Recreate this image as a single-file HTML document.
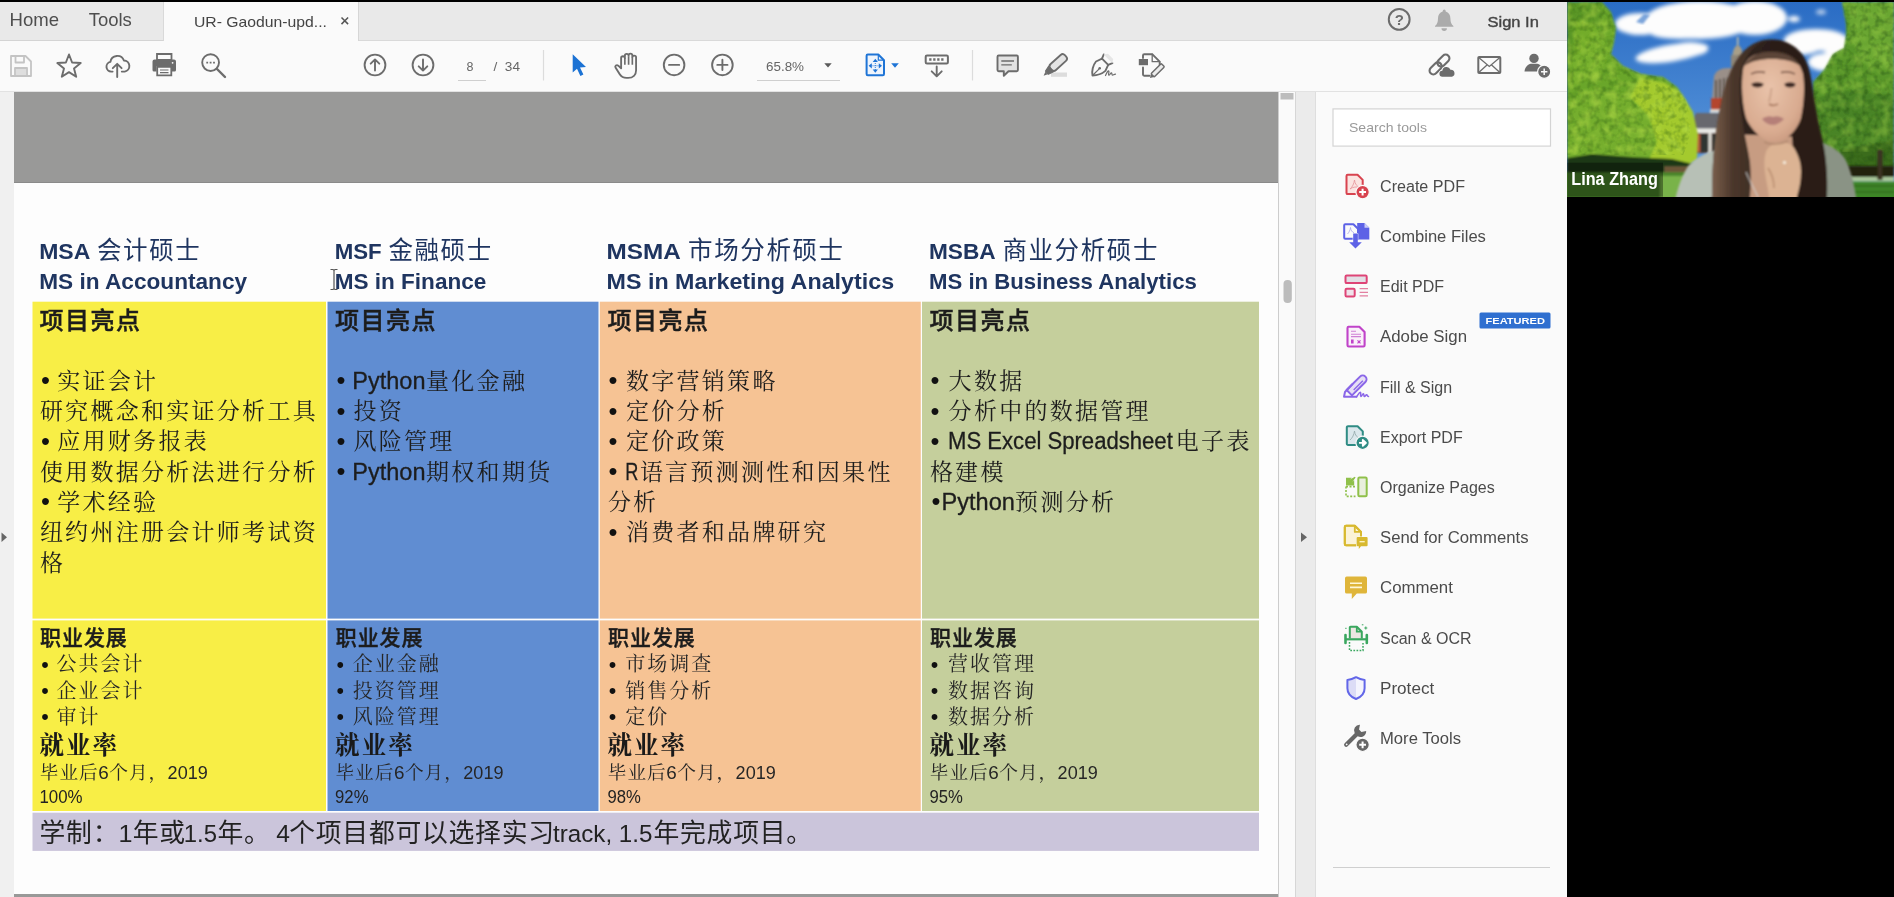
<!DOCTYPE html>
<html lang="zh">
<head>
<meta charset="utf-8">
<title>UR- Gaodun-upd...</title>
<style>
*{box-sizing:border-box;margin:0;padding:0}
html,body{width:1894px;height:897px;overflow:hidden;background:#000}
body{position:relative;font-family:"Liberation Sans","Noto Sans CJK SC",sans-serif;color:#4a4a4a}
.abs{position:absolute}
#app{position:absolute;left:0;top:2px;width:1567px;height:895px;background:#fafafa;overflow:hidden}
#tabbar{position:absolute;left:0;top:0;width:1567px;height:38.5px;background:#e9e9e9;border-bottom:1px solid #d9d9d9}
#hometools{position:absolute;left:0;top:0;width:163.5px;height:38.5px;background:#e9e9e9;border-right:1px solid #d9d9d9;border-bottom:1px solid #d4d4d4}
#acttab{position:absolute;left:163.5px;top:0;width:195.5px;height:39.5px;background:#fafafa;border-right:1px solid #d6d6d6}
#toolbar{position:absolute;left:0;top:38.5px;width:1567px;height:51px;background:#fafafa;border-bottom:1px solid #e2e2e2}
#doc{position:absolute;left:0;top:89.5px;width:1296px;height:806px;background:#f0f0f0}
#docgray{position:absolute;left:13.5px;top:0;width:1264.5px;height:806px;background:#999998}
#page{position:absolute;left:13.5px;top:90px;width:1264.5px;height:712px;background:#fdfdfd;border-top:1px solid #8a8a8a}
#vscroll{position:absolute;left:1278px;top:0;width:18px;height:806px;background:#fafafa;border-left:1px solid #cdcdcd;border-right:1px solid #d6d6d6}
#split{position:absolute;left:1296px;top:89.5px;width:20px;height:806px;background:#ebebeb;border-right:1px solid #dedede}
#panel{position:absolute;left:1316px;top:89.5px;width:251px;height:806px;background:#fafafa}
#ov{position:absolute;left:0;top:0;width:1894px;height:897px;will-change:transform}
</style>
</head>
<body>
<div id="app">
  <div id="tabbar">
    <div id="hometools"></div>
    <div id="acttab"></div>
  </div>
  <div id="toolbar"></div>
  <div id="doc">
    <div id="docgray"></div>
    <div id="page"></div>
    <div id="vscroll"></div>
  </div>
  <div id="split"></div>
  <div id="panel"></div>
</div>
<svg id="ov" width="1894" height="897" viewBox="0 0 1894 897">
<g id="slide">
<rect x="32.5" y="301.7" width="293.5" height="316.9" fill="#f8ee46"/>
<rect x="32.5" y="620.4" width="293.5" height="190.6" fill="#f8ee46"/>
<rect x="327.5" y="301.7" width="271.0" height="316.9" fill="#608dd2"/>
<rect x="327.5" y="620.4" width="271.0" height="190.6" fill="#608dd2"/>
<rect x="599.8" y="301.7" width="321.0" height="316.9" fill="#f6c394"/>
<rect x="599.8" y="620.4" width="321.0" height="190.6" fill="#f6c394"/>
<rect x="922" y="301.7" width="337" height="316.9" fill="#c5cf9c"/>
<rect x="922" y="620.4" width="337" height="190.6" fill="#c5cf9c"/>
<rect x="32.5" y="812.7" width="1226.5" height="38.2" fill="#cbc5db"/>
<text x="39.2" y="258.5" font-size="22.5" font-family="Liberation Sans, Noto Sans CJK SC, sans-serif" font-weight="700" fill="#1f3560" textLength="51.1" lengthAdjust="spacingAndGlyphs">MSA</text>
<text x="97.0 123.1 149.2 175.3" y="259.3" font-size="24.5" font-family="Noto Sans CJK SC, Liberation Sans, sans-serif" font-weight="400" fill="#1f3560">会计硕士</text>
<text x="39.2" y="288.5" font-size="22.5" font-family="Liberation Sans, Noto Sans CJK SC, sans-serif" font-weight="700" fill="#1f3560" textLength="207.9" lengthAdjust="spacingAndGlyphs">MS in Accountancy</text>
<text x="334.7" y="258.5" font-size="22.5" font-family="Liberation Sans, Noto Sans CJK SC, sans-serif" font-weight="700" fill="#1f3560" textLength="47.0" lengthAdjust="spacingAndGlyphs">MSF</text>
<text x="388.4 414.5 440.6 466.7" y="259.3" font-size="24.5" font-family="Noto Sans CJK SC, Liberation Sans, sans-serif" font-weight="400" fill="#1f3560">金融硕士</text>
<text x="334.7" y="288.5" font-size="22.5" font-family="Liberation Sans, Noto Sans CJK SC, sans-serif" font-weight="700" fill="#1f3560" textLength="151.6" lengthAdjust="spacingAndGlyphs">MS in Finance</text>
<text x="606.6" y="258.5" font-size="22.5" font-family="Liberation Sans, Noto Sans CJK SC, sans-serif" font-weight="700" fill="#1f3560" textLength="74.2" lengthAdjust="spacingAndGlyphs">MSMA</text>
<text x="688.1 714.2 740.3 766.4 792.5 818.6" y="259.3" font-size="24.5" font-family="Noto Sans CJK SC, Liberation Sans, sans-serif" font-weight="400" fill="#1f3560">市场分析硕士</text>
<text x="606.6" y="288.5" font-size="22.5" font-family="Liberation Sans, Noto Sans CJK SC, sans-serif" font-weight="700" fill="#1f3560" textLength="287.5" lengthAdjust="spacingAndGlyphs">MS in Marketing Analytics</text>
<text x="929.0" y="258.5" font-size="22.5" font-family="Liberation Sans, Noto Sans CJK SC, sans-serif" font-weight="700" fill="#1f3560" textLength="66.7" lengthAdjust="spacingAndGlyphs">MSBA</text>
<text x="1002.4 1028.5 1054.6 1080.7 1106.8 1132.9" y="259.3" font-size="24.5" font-family="Noto Sans CJK SC, Liberation Sans, sans-serif" font-weight="400" fill="#1f3560">商业分析硕士</text>
<text x="929.0" y="288.5" font-size="22.5" font-family="Liberation Sans, Noto Sans CJK SC, sans-serif" font-weight="700" fill="#1f3560" textLength="267.8" lengthAdjust="spacingAndGlyphs">MS in Business Analytics</text>
<text x="39.4 64.9 90.4 115.9" y="329.4" font-size="24" font-family="Noto Sans CJK SC, Liberation Sans, sans-serif" font-weight="500" fill="#1c1c1c" stroke="#1c1c1c" stroke-width=".45">项目亮点</text>
<text x="335.1 360.6 386.1 411.6" y="329.4" font-size="24" font-family="Noto Sans CJK SC, Liberation Sans, sans-serif" font-weight="500" fill="#1c1c1c" stroke="#1c1c1c" stroke-width=".45">项目亮点</text>
<text x="607.4 632.9 658.4 683.9" y="329.4" font-size="24" font-family="Noto Sans CJK SC, Liberation Sans, sans-serif" font-weight="500" fill="#1c1c1c" stroke="#1c1c1c" stroke-width=".45">项目亮点</text>
<text x="929.4 954.9 980.4 1005.9" y="329.4" font-size="24" font-family="Noto Sans CJK SC, Liberation Sans, sans-serif" font-weight="500" fill="#1c1c1c" stroke="#1c1c1c" stroke-width=".45">项目亮点</text>
<text x="41.0" y="389.2" font-size="25.5" font-family="Liberation Sans, Noto Sans CJK SC, sans-serif" fill="#111">•</text>
<text x="57.2 82.5 107.8 133.1" y="388.7" font-size="23.0" font-family="Noto Serif CJK SC, Liberation Serif, serif" font-weight="400" fill="#1d1d1d">实证会计</text>
<text x="39.9 65.1 90.4 115.7 141.0 166.2 191.5 216.8 242.1 267.4 292.7" y="419.0" font-size="23.0" font-family="Noto Serif CJK SC, Liberation Serif, serif" font-weight="400" fill="#1d1d1d">研究概念和实证分析工具</text>
<text x="41.0" y="449.8" font-size="25.5" font-family="Liberation Sans, Noto Sans CJK SC, sans-serif" fill="#111">•</text>
<text x="57.2 82.5 107.8 133.1 158.4 183.7" y="449.3" font-size="23.0" font-family="Noto Serif CJK SC, Liberation Serif, serif" font-weight="400" fill="#1d1d1d">应用财务报表</text>
<text x="39.9 65.1 90.4 115.7 141.0 166.2 191.5 216.8 242.1 267.4 292.7" y="479.6" font-size="23.0" font-family="Noto Serif CJK SC, Liberation Serif, serif" font-weight="400" fill="#1d1d1d">使用数据分析法进行分析</text>
<text x="41.0" y="510.4" font-size="25.5" font-family="Liberation Sans, Noto Sans CJK SC, sans-serif" fill="#111">•</text>
<text x="57.2 82.5 107.8 133.1" y="509.9" font-size="23.0" font-family="Noto Serif CJK SC, Liberation Serif, serif" font-weight="400" fill="#1d1d1d">学术经验</text>
<text x="39.9 65.1 90.4 115.7 141.0 166.2 191.5 216.8 242.1 267.4 292.7" y="540.2" font-size="23.0" font-family="Noto Serif CJK SC, Liberation Serif, serif" font-weight="400" fill="#1d1d1d">纽约州注册会计师考试资</text>
<text x="39.9" y="570.5" font-size="23.0" font-family="Noto Serif CJK SC, Liberation Serif, serif" font-weight="400" fill="#1d1d1d">格</text>
<text x="336.4" y="389.2" font-size="25.5" font-family="Liberation Sans, Noto Sans CJK SC, sans-serif" fill="#111">•</text>
<text x="352.3" y="388.7" font-size="23.0" font-family="Liberation Sans, Noto Sans CJK SC, sans-serif" font-weight="400" fill="#1d1d1d" textLength="73.2" lengthAdjust="spacingAndGlyphs" stroke="#1d1d1d" stroke-width=".3">Python</text>
<text x="426.1 451.3 476.6 501.9" y="388.7" font-size="23.0" font-family="Noto Serif CJK SC, Liberation Serif, serif" font-weight="400" fill="#1d1d1d">量化金融</text>
<text x="336.4" y="419.5" font-size="25.5" font-family="Liberation Sans, Noto Sans CJK SC, sans-serif" fill="#111">•</text>
<text x="353.5 378.7" y="419.0" font-size="23.0" font-family="Noto Serif CJK SC, Liberation Serif, serif" font-weight="400" fill="#1d1d1d">投资</text>
<text x="336.4" y="449.8" font-size="25.5" font-family="Liberation Sans, Noto Sans CJK SC, sans-serif" fill="#111">•</text>
<text x="353.5 378.7 404.0 429.3" y="449.3" font-size="23.0" font-family="Noto Serif CJK SC, Liberation Serif, serif" font-weight="400" fill="#1d1d1d">风险管理</text>
<text x="336.4" y="480.1" font-size="25.5" font-family="Liberation Sans, Noto Sans CJK SC, sans-serif" fill="#111">•</text>
<text x="352.3" y="479.6" font-size="23.0" font-family="Liberation Sans, Noto Sans CJK SC, sans-serif" font-weight="400" fill="#1d1d1d" textLength="73.2" lengthAdjust="spacingAndGlyphs" stroke="#1d1d1d" stroke-width=".3">Python</text>
<text x="426.1 451.3 476.6 501.9 527.2" y="479.6" font-size="23.0" font-family="Noto Serif CJK SC, Liberation Serif, serif" font-weight="400" fill="#1d1d1d">期权和期货</text>
<text x="608.6" y="389.2" font-size="25.5" font-family="Liberation Sans, Noto Sans CJK SC, sans-serif" fill="#111">•</text>
<text x="626.0 651.2 676.5 701.8 727.1 752.4" y="388.7" font-size="23.0" font-family="Noto Serif CJK SC, Liberation Serif, serif" font-weight="400" fill="#1d1d1d">数字营销策略</text>
<text x="608.6" y="419.5" font-size="25.5" font-family="Liberation Sans, Noto Sans CJK SC, sans-serif" fill="#111">•</text>
<text x="626.0 651.2 676.5 701.8" y="419.0" font-size="23.0" font-family="Noto Serif CJK SC, Liberation Serif, serif" font-weight="400" fill="#1d1d1d">定价分析</text>
<text x="608.6" y="449.8" font-size="25.5" font-family="Liberation Sans, Noto Sans CJK SC, sans-serif" fill="#111">•</text>
<text x="626.0 651.2 676.5 701.8" y="449.3" font-size="23.0" font-family="Noto Serif CJK SC, Liberation Serif, serif" font-weight="400" fill="#1d1d1d">定价政策</text>
<text x="608.6" y="480.1" font-size="25.5" font-family="Liberation Sans, Noto Sans CJK SC, sans-serif" fill="#111">•</text>
<text x="625.3" y="479.6" font-size="23.0" font-family="Liberation Sans, Noto Sans CJK SC, sans-serif" font-weight="400" fill="#1d1d1d" textLength="13.1" lengthAdjust="spacingAndGlyphs" stroke="#1d1d1d" stroke-width=".3">R</text>
<text x="639.9 665.1 690.4 715.7 741.0 766.2 791.5 816.8 842.1 867.4" y="479.6" font-size="23.0" font-family="Noto Serif CJK SC, Liberation Serif, serif" font-weight="400" fill="#1d1d1d">语言预测测性和因果性</text>
<text x="607.9 633.1" y="509.9" font-size="23.0" font-family="Noto Serif CJK SC, Liberation Serif, serif" font-weight="400" fill="#1d1d1d">分析</text>
<text x="608.6" y="540.7" font-size="25.5" font-family="Liberation Sans, Noto Sans CJK SC, sans-serif" fill="#111">•</text>
<text x="626.0 651.2 676.5 701.8 727.1 752.4 777.6 802.9" y="540.2" font-size="23.0" font-family="Noto Serif CJK SC, Liberation Serif, serif" font-weight="400" fill="#1d1d1d">消费者和品牌研究</text>
<text x="930.6" y="389.2" font-size="25.5" font-family="Liberation Sans, Noto Sans CJK SC, sans-serif" fill="#111">•</text>
<text x="948.6 973.9 999.2" y="388.7" font-size="23.0" font-family="Noto Serif CJK SC, Liberation Serif, serif" font-weight="400" fill="#1d1d1d">大数据</text>
<text x="930.6" y="419.5" font-size="25.5" font-family="Liberation Sans, Noto Sans CJK SC, sans-serif" fill="#111">•</text>
<text x="948.6 973.9 999.2 1024.5 1049.8 1075.0 1100.3 1125.6" y="419.0" font-size="23.0" font-family="Noto Serif CJK SC, Liberation Serif, serif" font-weight="400" fill="#1d1d1d">分析中的数据管理</text>
<text x="930.6" y="449.8" font-size="25.5" font-family="Liberation Sans, Noto Sans CJK SC, sans-serif" fill="#111">•</text>
<text x="948.0" y="449.3" font-size="23.0" font-family="Liberation Sans, Noto Sans CJK SC, sans-serif" font-weight="400" fill="#1d1d1d" textLength="224.8" lengthAdjust="spacingAndGlyphs" stroke="#1d1d1d" stroke-width=".3">MS Excel Spreadsheet</text>
<text x="1175.8 1201.1 1226.4" y="449.3" font-size="23.0" font-family="Noto Serif CJK SC, Liberation Serif, serif" font-weight="400" fill="#1d1d1d">电子表</text>
<text x="929.9 955.1 980.4" y="479.6" font-size="23.0" font-family="Noto Serif CJK SC, Liberation Serif, serif" font-weight="400" fill="#1d1d1d">格建模</text>
<text x="931.6" y="510.4" font-size="25.5" font-family="Liberation Sans, Noto Sans CJK SC, sans-serif" fill="#111">•</text>
<text x="941.5" y="509.9" font-size="23.0" font-family="Liberation Sans, Noto Sans CJK SC, sans-serif" font-weight="400" fill="#1d1d1d" textLength="73.4" lengthAdjust="spacingAndGlyphs" stroke="#1d1d1d" stroke-width=".3">Python</text>
<text x="1015.1 1040.4 1065.7 1091.0" y="509.9" font-size="23.0" font-family="Noto Serif CJK SC, Liberation Serif, serif" font-weight="400" fill="#1d1d1d">预测分析</text>
<text x="40.1 62.0 83.9 105.8" y="645.2" font-size="21.0" font-family="Noto Sans CJK SC, Liberation Sans, sans-serif" font-weight="500" fill="#1c1c1c" stroke="#1c1c1c" stroke-width=".4">职业发展</text>
<text x="41.2" y="671.5" font-size="21.5" font-family="Liberation Sans, Noto Sans CJK SC, sans-serif" fill="#111">•</text>
<text x="56.5 78.5 100.5 122.5" y="671.3" font-size="20" font-family="Noto Serif CJK SC, Liberation Serif, serif" font-weight="400" fill="#262626">公共会计</text>
<text x="41.2" y="697.8" font-size="21.5" font-family="Liberation Sans, Noto Sans CJK SC, sans-serif" fill="#111">•</text>
<text x="56.5 78.5 100.5 122.5" y="697.6" font-size="20" font-family="Noto Serif CJK SC, Liberation Serif, serif" font-weight="400" fill="#262626">企业会计</text>
<text x="41.2" y="724.1" font-size="21.5" font-family="Liberation Sans, Noto Sans CJK SC, sans-serif" fill="#111">•</text>
<text x="56.5 78.5" y="723.9" font-size="20" font-family="Noto Serif CJK SC, Liberation Serif, serif" font-weight="400" fill="#262626">审计</text>
<text x="39.4 66.0 92.6" y="754.4" font-size="24.5" font-family="Noto Serif CJK SC, Liberation Serif, serif" font-weight="700" fill="#1a1a1a">就业率</text>
<text x="39.7 59.4 79.1" y="779.2" font-size="18.6" font-family="Noto Serif CJK SC, Liberation Serif, serif" font-weight="400" fill="#262626">毕业后</text>
<text x="98.3" y="779.2" font-size="18.5" font-family="Liberation Sans, Noto Sans CJK SC, sans-serif" font-weight="400" fill="#262626" textLength="10.5" lengthAdjust="spacingAndGlyphs">6</text>
<text x="109.2 128.9 148.6" y="779.2" font-size="18.6" font-family="Noto Serif CJK SC, Liberation Serif, serif" font-weight="400" fill="#262626">个月，</text>
<text x="167.6" y="779.2" font-size="18.5" font-family="Liberation Sans, Noto Sans CJK SC, sans-serif" font-weight="400" fill="#262626" textLength="40.2" lengthAdjust="spacingAndGlyphs">2019</text>
<text x="39.4" y="802.6" font-size="17.5" font-family="Liberation Sans, Noto Sans CJK SC, sans-serif" font-weight="400" fill="#222" textLength="43.1" lengthAdjust="spacingAndGlyphs">100%</text>
<text x="335.8 357.7 379.6 401.5" y="645.2" font-size="21.0" font-family="Noto Sans CJK SC, Liberation Sans, sans-serif" font-weight="500" fill="#1c1c1c" stroke="#1c1c1c" stroke-width=".4">职业发展</text>
<text x="336.6" y="671.5" font-size="21.5" font-family="Liberation Sans, Noto Sans CJK SC, sans-serif" fill="#111">•</text>
<text x="352.7 374.7 396.7 418.7" y="671.3" font-size="20" font-family="Noto Serif CJK SC, Liberation Serif, serif" font-weight="400" fill="#262626">企业金融</text>
<text x="336.6" y="697.8" font-size="21.5" font-family="Liberation Sans, Noto Sans CJK SC, sans-serif" fill="#111">•</text>
<text x="352.7 374.7 396.7 418.7" y="697.6" font-size="20" font-family="Noto Serif CJK SC, Liberation Serif, serif" font-weight="400" fill="#262626">投资管理</text>
<text x="336.6" y="724.1" font-size="21.5" font-family="Liberation Sans, Noto Sans CJK SC, sans-serif" fill="#111">•</text>
<text x="352.7 374.7 396.7 418.7" y="723.9" font-size="20" font-family="Noto Serif CJK SC, Liberation Serif, serif" font-weight="400" fill="#262626">风险管理</text>
<text x="335.1 361.7 388.3" y="754.4" font-size="24.5" font-family="Noto Serif CJK SC, Liberation Serif, serif" font-weight="700" fill="#1a1a1a">就业率</text>
<text x="335.4 355.1 374.8" y="779.2" font-size="18.6" font-family="Noto Serif CJK SC, Liberation Serif, serif" font-weight="400" fill="#262626">毕业后</text>
<text x="394.0" y="779.2" font-size="18.5" font-family="Liberation Sans, Noto Sans CJK SC, sans-serif" font-weight="400" fill="#262626" textLength="10.5" lengthAdjust="spacingAndGlyphs">6</text>
<text x="404.9 424.6 444.3" y="779.2" font-size="18.6" font-family="Noto Serif CJK SC, Liberation Serif, serif" font-weight="400" fill="#262626">个月，</text>
<text x="463.3" y="779.2" font-size="18.5" font-family="Liberation Sans, Noto Sans CJK SC, sans-serif" font-weight="400" fill="#262626" textLength="40.2" lengthAdjust="spacingAndGlyphs">2019</text>
<text x="335.1" y="802.6" font-size="17.5" font-family="Liberation Sans, Noto Sans CJK SC, sans-serif" font-weight="400" fill="#222" textLength="33.4" lengthAdjust="spacingAndGlyphs">92%</text>
<text x="608.1 630.0 651.9 673.8" y="645.2" font-size="21.0" font-family="Noto Sans CJK SC, Liberation Sans, sans-serif" font-weight="500" fill="#1c1c1c" stroke="#1c1c1c" stroke-width=".4">职业发展</text>
<text x="608.8" y="671.5" font-size="21.5" font-family="Liberation Sans, Noto Sans CJK SC, sans-serif" fill="#111">•</text>
<text x="625.2 647.2 669.2 691.2" y="671.3" font-size="20" font-family="Noto Serif CJK SC, Liberation Serif, serif" font-weight="400" fill="#262626">市场调查</text>
<text x="608.8" y="697.8" font-size="21.5" font-family="Liberation Sans, Noto Sans CJK SC, sans-serif" fill="#111">•</text>
<text x="625.2 647.2 669.2 691.2" y="697.6" font-size="20" font-family="Noto Serif CJK SC, Liberation Serif, serif" font-weight="400" fill="#262626">销售分析</text>
<text x="608.8" y="724.1" font-size="21.5" font-family="Liberation Sans, Noto Sans CJK SC, sans-serif" fill="#111">•</text>
<text x="625.2 647.2" y="723.9" font-size="20" font-family="Noto Serif CJK SC, Liberation Serif, serif" font-weight="400" fill="#262626">定价</text>
<text x="607.4 634.0 660.6" y="754.4" font-size="24.5" font-family="Noto Serif CJK SC, Liberation Serif, serif" font-weight="700" fill="#1a1a1a">就业率</text>
<text x="607.7 627.4 647.1" y="779.2" font-size="18.6" font-family="Noto Serif CJK SC, Liberation Serif, serif" font-weight="400" fill="#262626">毕业后</text>
<text x="666.3" y="779.2" font-size="18.5" font-family="Liberation Sans, Noto Sans CJK SC, sans-serif" font-weight="400" fill="#262626" textLength="10.5" lengthAdjust="spacingAndGlyphs">6</text>
<text x="677.2 696.9 716.6" y="779.2" font-size="18.6" font-family="Noto Serif CJK SC, Liberation Serif, serif" font-weight="400" fill="#262626">个月，</text>
<text x="735.6" y="779.2" font-size="18.5" font-family="Liberation Sans, Noto Sans CJK SC, sans-serif" font-weight="400" fill="#262626" textLength="40.2" lengthAdjust="spacingAndGlyphs">2019</text>
<text x="607.4" y="802.6" font-size="17.5" font-family="Liberation Sans, Noto Sans CJK SC, sans-serif" font-weight="400" fill="#222" textLength="33.4" lengthAdjust="spacingAndGlyphs">98%</text>
<text x="930.1 952.0 973.9 995.8" y="645.2" font-size="21.0" font-family="Noto Sans CJK SC, Liberation Sans, sans-serif" font-weight="500" fill="#1c1c1c" stroke="#1c1c1c" stroke-width=".4">职业发展</text>
<text x="930.8" y="671.5" font-size="21.5" font-family="Liberation Sans, Noto Sans CJK SC, sans-serif" fill="#111">•</text>
<text x="947.9 969.9 991.9 1013.9" y="671.3" font-size="20" font-family="Noto Serif CJK SC, Liberation Serif, serif" font-weight="400" fill="#262626">营收管理</text>
<text x="930.8" y="697.8" font-size="21.5" font-family="Liberation Sans, Noto Sans CJK SC, sans-serif" fill="#111">•</text>
<text x="947.9 969.9 991.9 1013.9" y="697.6" font-size="20" font-family="Noto Serif CJK SC, Liberation Serif, serif" font-weight="400" fill="#262626">数据咨询</text>
<text x="930.8" y="724.1" font-size="21.5" font-family="Liberation Sans, Noto Sans CJK SC, sans-serif" fill="#111">•</text>
<text x="947.9 969.9 991.9 1013.9" y="723.9" font-size="20" font-family="Noto Serif CJK SC, Liberation Serif, serif" font-weight="400" fill="#262626">数据分析</text>
<text x="929.4 956.0 982.6" y="754.4" font-size="24.5" font-family="Noto Serif CJK SC, Liberation Serif, serif" font-weight="700" fill="#1a1a1a">就业率</text>
<text x="929.7 949.4 969.1" y="779.2" font-size="18.6" font-family="Noto Serif CJK SC, Liberation Serif, serif" font-weight="400" fill="#262626">毕业后</text>
<text x="988.3" y="779.2" font-size="18.5" font-family="Liberation Sans, Noto Sans CJK SC, sans-serif" font-weight="400" fill="#262626" textLength="10.5" lengthAdjust="spacingAndGlyphs">6</text>
<text x="999.2 1018.9 1038.6" y="779.2" font-size="18.6" font-family="Noto Serif CJK SC, Liberation Serif, serif" font-weight="400" fill="#262626">个月，</text>
<text x="1057.6" y="779.2" font-size="18.5" font-family="Liberation Sans, Noto Sans CJK SC, sans-serif" font-weight="400" fill="#262626" textLength="40.2" lengthAdjust="spacingAndGlyphs">2019</text>
<text x="929.4" y="802.6" font-size="17.5" font-family="Liberation Sans, Noto Sans CJK SC, sans-serif" font-weight="400" fill="#222" textLength="33.4" lengthAdjust="spacingAndGlyphs">95%</text>
<text x="39.6 66.1 92.7" y="841.8" font-size="25.8" font-family="Noto Sans CJK SC, Liberation Sans, sans-serif" font-weight="400" fill="#222">学制：</text>
<text x="118.5" y="841.8" font-size="24.5" font-family="Liberation Sans, Noto Sans CJK SC, sans-serif" font-weight="400" fill="#222" textLength="14.0" lengthAdjust="spacingAndGlyphs" xml:space="preserve">1</text>
<text x="132.7 159.2" y="841.8" font-size="25.8" font-family="Noto Sans CJK SC, Liberation Sans, sans-serif" font-weight="400" fill="#222">年或</text>
<text x="183.8" y="841.8" font-size="24.5" font-family="Liberation Sans, Noto Sans CJK SC, sans-serif" font-weight="400" fill="#222" textLength="33.2" lengthAdjust="spacingAndGlyphs" xml:space="preserve">1.5</text>
<text x="217.6 244.1" y="841.8" font-size="25.8" font-family="Noto Sans CJK SC, Liberation Sans, sans-serif" font-weight="400" fill="#222">年。</text>
<text x="276.3" y="841.8" font-size="24.5" font-family="Liberation Sans, Noto Sans CJK SC, sans-serif" font-weight="400" fill="#222" textLength="13.7" lengthAdjust="spacingAndGlyphs" xml:space="preserve">4</text>
<text x="289.2 315.7 342.3 368.9 395.4 422.0 448.6 475.1 501.7 528.3" y="841.8" font-size="25.8" font-family="Noto Sans CJK SC, Liberation Sans, sans-serif" font-weight="400" fill="#222">个项目都可以选择实习</text>
<text x="553.0" y="841.8" font-size="24.5" font-family="Liberation Sans, Noto Sans CJK SC, sans-serif" font-weight="400" fill="#222" textLength="99.5" lengthAdjust="spacingAndGlyphs" xml:space="preserve">track, 1.5</text>
<text x="653.5 680.0 706.6 733.2 759.7 786.3" y="841.8" font-size="25.8" font-family="Noto Sans CJK SC, Liberation Sans, sans-serif" font-weight="400" fill="#222">年完成项目。</text>
<path d="M330.5 269.5h2q1.2 0 1.5 1q.3-1 1.5-1h2M334 270.5v18M330.5 289.5h2q1.2 0 1.5-1q.3 1 1.5 1h2" stroke="#555" stroke-width="1.2" fill="none"/>
</g>
<g id="chrome">
<text x="9.5" y="26.0" font-size="18.5" font-family="Liberation Sans, sans-serif" font-weight="400" fill="#4e4e4e" textLength="49.5" lengthAdjust="spacingAndGlyphs">Home</text>
<text x="88.7" y="26.0" font-size="18.5" font-family="Liberation Sans, sans-serif" font-weight="400" fill="#4e4e4e" textLength="43.1" lengthAdjust="spacingAndGlyphs">Tools</text>
<text x="194.0" y="27.0" font-size="14.2" font-family="Liberation Sans, sans-serif" font-weight="400" fill="#444" textLength="133.0" lengthAdjust="spacingAndGlyphs">UR- Gaodun-upd...</text>
<path d="M341.500 17.500l6.600 6.600M348.100 17.500l-6.600 6.600" stroke="#555" stroke-width="1.500"/>
<circle cx="1399.200" cy="19.400" r="10.400" fill="none" stroke="#6c6c6c" stroke-width="2"/><text x="1394.7" y="24.8" font-size="15" font-family="Liberation Sans, sans-serif" font-weight="700" fill="#6c6c6c">?</text>
<path d="M1444.200 9.500a1.500 1.500 0 0 1 1.500 1.500v.400c3 .800 4.700 3.500 4.700 6.800c0 4 1 6 3 7.800v.800h-18.400v-.800c2-1.800 3-3.800 3-7.800c0-3.300 1.700-6 4.700-6.800v-.400a1.500 1.500 0 0 1 1.500-1.500z" fill="#ababab"/><path d="M1441.500 28.300h5.400a2.700 2.700 0 0 1 -5.400 0z" fill="#ababab"/>
<text x="1487.5" y="26.5" font-size="15.5" font-family="Liberation Sans, sans-serif" font-weight="400" fill="#444" textLength="51.3" lengthAdjust="spacingAndGlyphs" stroke="#444" stroke-width=".4">Sign In</text>
<g fill="none" stroke="#c4c4c4" stroke-width="1.8" stroke-linejoin="round"><path d="M11 56h14.5l5.5 5.5v14.5h-20z"/><path d="M15.5 56v6.5h8.5v-6.5M15 76v-8h12v8" /><path d="M16 69h10v6h-10z" fill="#dedede" stroke="none"/></g>
<polygon points="69.0,54.5 72.1,62.5 80.7,63.0 74.0,68.4 76.2,76.8 69.0,72.1 61.8,76.8 64.0,68.4 57.3,63.0 65.9,62.5" fill="none" stroke="#6c6c6c" stroke-width="1.9" stroke-linecap="round" stroke-linejoin="round"/>
<path d="M112.6 71.6h-1.400a4.900 4.900 0 0 1 -.8-9.700a7 7 0 0 1 13.500-1.400a5.600 5.600 0 0 1 .9 11.100h-3" fill="none" stroke="#6c6c6c" stroke-width="1.9" stroke-linecap="round" stroke-linejoin="round"/><path d="M117.2 77v-12.5M112.8 68.2l4.4-4.4l4.4 4.4" fill="none" stroke="#6c6c6c" stroke-width="1.9" stroke-linecap="round" stroke-linejoin="round"/>
<g fill="#6c6c6c"><path d="M157 54h14.5v6h-14.5z" fill="none" stroke="#6c6c6c" stroke-width="1.8"/><path d="M154.5 59.5h19.500a2 2 0 0 1 2 2v8.5a1.500 1.500 0 0 1 -1.500 1.500h-2.500v-5.500h-15.500v5.500h-2.500a1.500 1.500 0 0 1 -1.500 -1.500v-8.500a2 2 0 0 1 2 -2z"/><path d="M157.200 66.800h14.100v8.600h-14.100z" fill="none" stroke="#6c6c6c" stroke-width="1.800"/><path d="M160 70h8.500M160 72.600h8.500" stroke="#6c6c6c" stroke-width="1.100"/><circle cx="172.600" cy="62.800" r="0.900" fill="#fafafa"/></g>
<circle cx="210.6" cy="62.6" r="8.4" fill="none" stroke="#6c6c6c" stroke-width="1.9" stroke-linecap="round" stroke-linejoin="round"/><path d="M217 69l8 8" stroke="#6c6c6c" stroke-width="2.4" stroke-linecap="round"/><path d="M206.300 62.600h8.600" stroke="#6c6c6c" stroke-width="1.600" stroke-dasharray="1.800 1.600"/>
<circle cx="375" cy="65" r="10.400" fill="none" stroke="#6c6c6c" stroke-width="1.9" stroke-linecap="round" stroke-linejoin="round"/><path d="M375 70.5v-11M370.7 63.7l4.300 -4.3l4.300 4.3" fill="none" stroke="#6c6c6c" stroke-width="1.9" stroke-linecap="round" stroke-linejoin="round"/>
<circle cx="423" cy="65" r="10.400" fill="none" stroke="#6c6c6c" stroke-width="1.9" stroke-linecap="round" stroke-linejoin="round"/><path d="M423 59.5v11M418.7 66.3l4.300 4.3l4.300 -4.3" fill="none" stroke="#6c6c6c" stroke-width="1.9" stroke-linecap="round" stroke-linejoin="round"/>
<text x="466.5" y="70.8" font-size="12.5" font-family="Liberation Sans, sans-serif" font-weight="400" fill="#666">8</text>
<path d="M458 80.500h28" stroke="#cfcfcf" stroke-width="1"/>
<text x="493.5" y="71.2" font-size="12.5" font-family="Liberation Sans, sans-serif" font-weight="400" fill="#666" textLength="26.5" lengthAdjust="spacingAndGlyphs" xml:space="preserve">/  34</text>
<path d="M543.500 50v30.500M972.500 50v30.500" stroke="#dcdcdc" stroke-width="1.200"/>
<path d="M572.700 54.200v18.400l4.300-3.800l3.400 7.200l3-1.400l-3.400-7.100l6-.4z" fill="#1b72d4"/>
<g transform="translate(626.4 65.5) scale(1.1 1.04) translate(-625.3 -65.5)"><path d="M620.500 66.500v-8.200a1.700 1.700 0 0 1 3.400 0v-2.200a1.700 1.700 0 0 1 3.400 0v-.300a1.700 1.700 0 0 1 3.400 0v1.800a1.700 1.700 0 0 1 3.400 0v12.400c0 4.500-2.800 7.500-7.200 7.500h-1.500c-3 0-4.800-1.300-6.300-3.800l-3.700-6.300c-.8-1.400 1-3 2.500-1.700l2.600 2.600z" fill="none" stroke="#6c6c6c" stroke-width="1.700" stroke-linejoin="round"/><path d="M623.900 58.300v6.500M627.300 56.500v8.200M630.700 57.800v7" stroke="#6c6c6c" stroke-width="1.500"/></g>
<circle cx="674.100" cy="64.900" r="10.300" fill="none" stroke="#6c6c6c" stroke-width="1.9" stroke-linecap="round" stroke-linejoin="round"/><path d="M669 64.900h10.200" fill="none" stroke="#6c6c6c" stroke-width="1.9" stroke-linecap="round" stroke-linejoin="round"/>
<circle cx="722.400" cy="64.900" r="10.300" fill="none" stroke="#6c6c6c" stroke-width="1.9" stroke-linecap="round" stroke-linejoin="round"/><path d="M717.300 64.900h10.200M722.400 59.800v10.200" fill="none" stroke="#6c6c6c" stroke-width="1.9" stroke-linecap="round" stroke-linejoin="round"/>
<text x="766.0" y="70.8" font-size="12.5" font-family="Liberation Sans, sans-serif" font-weight="400" fill="#666" textLength="38.0" lengthAdjust="spacingAndGlyphs">65.8%</text>
<path d="M757 80.500h83" stroke="#cfcfcf" stroke-width="1"/>
<path d="M824.300 63.300h7.400l-3.700 4.200z" fill="#5a5a5a"/>
<path d="M867.800 54.500h10.500l5.700 5.700v13.800a1.200 1.200 0 0 1 -1.200 1.200h-15a1.200 1.200 0 0 1 -1.200 -1.200v-18.300a1.200 1.200 0 0 1 1.200 -1.200z" fill="#eef4fc" stroke="#1e74d6" stroke-width="2" stroke-linejoin="round"/><path d="M878.300 54.500v5.700h5.700" fill="none" stroke="#1e74d6" stroke-width="1.200"/><path d="M875.300 58.800l2.600 3.200h-5.200zM875.300 72.800l2.600-3.200h-5.200zM868.600 65.800l3.200-2.600v5.200zM882 65.800l-3.200-2.600v5.200z" fill="#1e74d6"/><path d="M875.300 61v9.600M870.500 65.800h9.600" stroke="#1e74d6" stroke-width="0.900" stroke-dasharray="1 1"/>
<path d="M891.200 63.200h7.600l-3.800 4.600z" fill="#1e74d6"/>
<rect x="925.700" y="55.500" width="22.200" height="8" rx="1.300" fill="none" stroke="#6c6c6c" stroke-width="2"/><path d="M929.200 59.500h15.500" stroke="#6c6c6c" stroke-width="2.600" stroke-dasharray="2.300 1.700"/><path d="M936.700 66.500v9.500M931.700 71.300l5 5l5-5" fill="none" stroke="#6c6c6c" stroke-width="1.9" stroke-linecap="round" stroke-linejoin="round"/>
<path d="M998.700 55.500h18a1.200 1.200 0 0 1 1.200 1.200v13.300a1.200 1.200 0 0 1 -1.200 1.200h-8.200l-4.700 4.600v-4.600h-5.100a1.200 1.200 0 0 1 -1.200 -1.200v-13.300a1.200 1.200 0 0 1 1.200 -1.200z" fill="#e2e2e2" stroke="#6c6c6c" stroke-width="1.900" stroke-linejoin="round"/><path d="M1001.300 61h12.700M1001.300 64.800h10.500" stroke="#6c6c6c" stroke-width="1.300"/>
<rect x="1051" y="72.500" width="16" height="4.300" fill="#dcdcdc"/><g transform="translate(1055.5 65) rotate(-42)"><rect x="-6" y="-4" width="19.500" height="8" rx="3" fill="#e4e4e4" stroke="#6c6c6c" stroke-width="1.800"/><path d="M-6 -3.600l-5.500 1.500v4.200l5.500 1.500z" fill="#6c6c6c" stroke="#6c6c6c" stroke-width="1.200" stroke-linejoin="round"/><path d="M-12 -1.800l-4 1.800l4 1.800z" fill="#6c6c6c"/></g>
<g transform="translate(1103 65)"><path d="M-10.500 10.500c-1-4 .5-10.500 3.500-14l6-2.800l6.200 6.200l-2.800 6c-3.500 3-9 4.600-12.900 4.600z" fill="none" stroke="#6c6c6c" stroke-width="1.900" stroke-linejoin="round"/><path d="M-10 10l6.200-6.200" stroke="#6c6c6c" stroke-width="1.200"/><circle cx="-3.300" cy="3.300" r="1.300" fill="#6c6c6c"/><path d="M-1-6.300l1.700-4.200M5.200 -.100l4.200-1.700" stroke="#6c6c6c" stroke-width="1.900" stroke-linecap="round"/><path d="M.700-10.500l4.300-.800l5.200 5.200l-.800 4.300z" fill="#e6e6e6"/><path d="M2.500 10.500c1.500-3 2.500-5 3.300-4.500c.8.500-1 4 .2 4.200c1 .200 1.500-2.500 2.500-2.300c.8.200 0 2 1 2.200c.7.100 1.500-.8 3-1" fill="none" stroke="#6c6c6c" stroke-width="1.200" stroke-linecap="round"/></g>
<g fill="none" stroke="#6c6c6c" stroke-width="1.900" stroke-linejoin="round" stroke-linecap="round"><path d="M1143 58v-2.600a1.200 1.200 0 0 1 1.200-1.200h8l7.500 7.500v3M1143 67.500v7a1.200 1.200 0 0 0 1.200 1.200h5.300"/><path d="M1152.200 54.200v7.500h7.500" stroke-width="1.300"/></g><rect x="1138.800" y="59" width="9.200" height="6.200" fill="#6c6c6c"/><g transform="translate(1156.500 71.500) rotate(-45)"><rect x="-5.500" y="-2.300" width="14.500" height="4.600" rx="1" fill="#ececec" stroke="#6c6c6c" stroke-width="1.500"/><path d="M-5.500 -2.300l-3.800 2.300l3.800 2.300z" fill="#6c6c6c"/></g>
<g transform="translate(1439.500 64.500) rotate(-45)" fill="none" stroke="#6c6c6c" stroke-width="2.100"><rect x="-12.500" y="-3.800" width="14" height="7.600" rx="3.800"/><rect x="-1.500" y="-3.800" width="14" height="7.600" rx="3.800"/></g><path d="M1442.500 76.700a3 3 0 0 1 -.200 -6a4.300 4.300 0 0 1 8.200 -1a3.600 3.600 0 0 1 1.500 7z" fill="#6c6c6c" stroke="#fafafa" stroke-width="1.200" paint-order="stroke"/>
<rect x="1478.300" y="57" width="22" height="16" rx=".800" fill="none" stroke="#6c6c6c" stroke-width="2"/><path d="M1479 57.800l10.300 8.700l10.300-8.700M1479 72.300l8-7.200M1499.600 72.300l-8-7.200" fill="none" stroke="#6c6c6c" stroke-width="1.300"/>
<circle cx="1534" cy="58.400" r="4.700" fill="#6c6c6c"/><path d="M1524.500 71.500c.300-4.500 3.500-7.300 6.300-7.800h6.400c2.800.5 6 3.300 6.300 7.800z" fill="#6c6c6c"/><circle cx="1544.200" cy="71.800" r="6.600" fill="#6c6c6c" stroke="#fafafa" stroke-width="1.300"/><path d="M1541 71.800h6.400M1544.200 68.600v6.400" stroke="#fafafa" stroke-width="1.500"/>
<rect x="1333" y="108.900" width="217.500" height="37.200" fill="#fff" stroke="#d4d4d4" stroke-width="1.200"/>
<text x="1349.0" y="131.5" font-size="13" font-family="Liberation Sans, sans-serif" font-weight="400" fill="#9a9a9a" textLength="78.0" lengthAdjust="spacingAndGlyphs">Search tools</text>
<text x="1380.0" y="191.9" font-size="16" font-family="Liberation Sans, sans-serif" font-weight="400" fill="#4b4b4b" textLength="85.0" lengthAdjust="spacingAndGlyphs">Create PDF</text>
<text x="1380.0" y="242.1" font-size="16" font-family="Liberation Sans, sans-serif" font-weight="400" fill="#4b4b4b" textLength="105.9" lengthAdjust="spacingAndGlyphs">Combine Files</text>
<text x="1380.0" y="292.3" font-size="16" font-family="Liberation Sans, sans-serif" font-weight="400" fill="#4b4b4b">Edit PDF</text>
<text x="1380.0" y="342.4" font-size="16" font-family="Liberation Sans, sans-serif" font-weight="400" fill="#4b4b4b" textLength="87.0" lengthAdjust="spacingAndGlyphs">Adobe Sign</text>
<text x="1380.0" y="392.6" font-size="16" font-family="Liberation Sans, sans-serif" font-weight="400" fill="#4b4b4b">Fill &amp; Sign</text>
<text x="1380.0" y="442.8" font-size="16" font-family="Liberation Sans, sans-serif" font-weight="400" fill="#4b4b4b">Export PDF</text>
<text x="1380.0" y="493.0" font-size="16" font-family="Liberation Sans, sans-serif" font-weight="400" fill="#4b4b4b">Organize Pages</text>
<text x="1380.0" y="543.2" font-size="16" font-family="Liberation Sans, sans-serif" font-weight="400" fill="#4b4b4b" textLength="148.5" lengthAdjust="spacingAndGlyphs">Send for Comments</text>
<text x="1380.0" y="593.3" font-size="16" font-family="Liberation Sans, sans-serif" font-weight="400" fill="#4b4b4b" textLength="72.9" lengthAdjust="spacingAndGlyphs">Comment</text>
<text x="1380.0" y="643.5" font-size="16" font-family="Liberation Sans, sans-serif" font-weight="400" fill="#4b4b4b">Scan &amp; OCR</text>
<text x="1380.0" y="693.7" font-size="16" font-family="Liberation Sans, sans-serif" font-weight="400" fill="#4b4b4b" textLength="54.2" lengthAdjust="spacingAndGlyphs">Protect</text>
<text x="1380.0" y="743.9" font-size="16" font-family="Liberation Sans, sans-serif" font-weight="400" fill="#4b4b4b" textLength="81.0" lengthAdjust="spacingAndGlyphs">More Tools</text>
<rect x="1479.500" y="312.500" width="71" height="16" rx="1.500" fill="#2f6fd0"/>
<text x="1485.5" y="324.3" font-size="9.5" font-family="Liberation Sans, sans-serif" font-weight="700" fill="#fff" textLength="59.5" lengthAdjust="spacingAndGlyphs">FEATURED</text>
<path d="M1333 867.500h217" stroke="#cfcfcf" stroke-width="1"/>
<rect x="1280.500" y="93" width="13" height="6.500" fill="#bdbdbd"/><rect x="1283.500" y="280" width="8.300" height="23" rx="4" fill="#bcbcbc"/>
<path d="M1301 532.500l6 4.700l-6 4.700z" fill="#666"/><path d="M1.500 532.500l5.500 4.700l-5.500 4.700z" fill="#666"/>
<path d="M1347.7 174.700h9.800l5.200 5.200v13a1.200 1.200 0 0 1 -1.200 1.200h-13.800a1.200 1.200 0 0 1 -1.200 -1.200v-17a1.200 1.200 0 0 1 1.200 -1.200z" fill="#fbe4e1" stroke="#d8434f" stroke-width="2" stroke-linejoin="round"/><path d="M1350 189c2.500-2 4-5.500 4.500-9M1354.500 180c.3 4 2.500 6.500 5.500 7.500M1350 189c3-2.200 6.500-2.500 10-1.500" fill="none" stroke="#e79a9f" stroke-width="0.900"/><circle cx="1362.600" cy="192.100" r="6.700" fill="#d8434f" stroke="#fafafa" stroke-width="1.200"/><path d="M1359.200 192.100h6.800M1362.600 188.700v6.800" stroke="#fff" stroke-width="2"/>
<path d="M1357.200 223h7.300l4.800 4.800v11.700h-12.100z" fill="#5d62e6"/><path d="M1364.500 223v4.800h4.800z" fill="#c9cbf7"/><path d="M1345.200 224.200h8.200l4.600 4.600v10h-12.800a1 1 0 0 1 -1 -1v-12.600a1 1 0 0 1 1 -1z" fill="#fafafa" stroke="#5d62e6" stroke-width="2" stroke-linejoin="round"/><path d="M1347.500 234c1.500-1.500 2.700-4 3-6.500M1350.500 227.500c.3 3 1.500 4.500 3.500 5.200" fill="none" stroke="#a9a6e8" stroke-width=".8"/><path d="M1353.200 233.500h4.600v8.800h4l-6.300 6.200l-6.300-6.200h4z" fill="#5d62e6" stroke="#fafafa" stroke-width="1" paint-order="stroke"/>
<rect x="1345.500" y="275.500" width="21.200" height="7.600" rx="1.200" fill="#e2dfe5" stroke="#de4476" stroke-width="2"/><rect x="1345.500" y="288.800" width="9.200" height="7.600" rx="1.200" fill="#efe2ea" stroke="#de4476" stroke-width="2"/><path d="M1359.600 288.600h8.400M1359.600 292.300h8.400M1359.600 295.900h8.400" stroke="#e27fa0" stroke-width="1.200"/>
<path d="M1348.700 326.700h10.600l5.300 5.300v13.300a1.200 1.200 0 0 1 -1.200 1.200h-14.700a1.200 1.200 0 0 1 -1.200 -1.200v-17.400a1.200 1.200 0 0 1 1.200 -1.200z" fill="#faf0fa" stroke="#c043c9" stroke-width="2.100" stroke-linejoin="round"/><path d="M1351 331.300h5M1351 334.300h10M1351 336.600h10" stroke="#cf7fd5" stroke-width="1.100"/><rect x="1351" y="339.500" width="2.600" height="4" fill="#c043c9"/><path d="M1357.500 340.300l3 3M1360.500 340.300l-3 3" stroke="#c043c9" stroke-width="1.200"/>
<g transform="translate(1356 386) rotate(-45)"><path d="M-9.500 -3.800h19a3.800 3.800 0 0 1 0 7.600h-19z" fill="#e6def5" stroke="#8a66e8" stroke-width="2" stroke-linejoin="round"/><path d="M-4.500 1.200h13" stroke="#8a66e8" stroke-width="1.400"/></g><path d="M1352.300 384.300l-7.300 7.700l-1 4.800h12.500" fill="none" stroke="#8a66e8" stroke-width="2" stroke-linejoin="round" stroke-linecap="round"/><path d="M1356.500 396.800c1.500-2 3-5 4-4.500c1 .5-.8 4 .4 4.300c1 .2 1.400-3 2.500-2.800c.9.200.1 2.600 1 2.800c.8.200 1.300-2 2.300-1.800c.8.200.3 1.500 1.800 1.600" fill="none" stroke="#8a66e8" stroke-width="1.500" stroke-linecap="round"/>
<path d="M1348 426.200h9.600l5.200 5.200v12.300a1.200 1.200 0 0 1 -1.200 1.200h-13.600a1.200 1.200 0 0 1 -1.200 -1.200v-16.300a1.200 1.200 0 0 1 1.200 -1.200z" fill="#dbe7ec" stroke="#2f8c84" stroke-width="2" stroke-linejoin="round"/><path d="M1350 440c2.500-2 4-5.500 4.500-9M1354.500 431c.3 4 2.500 6.500 5.500 7.500" fill="none" stroke="#9aaeb0" stroke-width="0.900"/><circle cx="1362.600" cy="442.800" r="6.700" fill="#2f8c84" stroke="#fafafa" stroke-width="1.200"/><path d="M1359 442.800h5M1362.800 439.800l3.200 3l-3.200 3z" stroke="#fff" stroke-width="1.800" fill="#fff" stroke-linejoin="round"/>
<rect x="1358.300" y="477.500" width="8.400" height="18.800" rx="1.200" fill="#e9efdd" stroke="#8fc04a" stroke-width="2"/><path d="M1346 486.600h9.500M1346 486.600v9.800h9.500" fill="none" stroke="#8fc04a" stroke-width="1.600" stroke-dasharray="2 1.500"/><path d="M1346 477.800h5.800l-1.800 1.800l4.800-2.900l.8.800l-3.200 4.500l1.800-1.800v5.300h-8.200z" fill="#8fc04a" transform="rotate(0)"/>
<path d="M1346 525.700h8.800l6.200 6.200v4.500M1356 545.300h-10a1.200 1.200 0 0 1 -1.200 -1.200v-17.200a1.200 1.200 0 0 1 1.200 -1.200" fill="#fbf4dc" stroke="#d8b92f" stroke-width="2" stroke-linejoin="round"/><path d="M1346 526.700h8.300l5.700 5.700v12h-14z" fill="#fbf3d8"/><path d="M1354.800 525.700v6.200h6.200" fill="none" stroke="#d8b92f" stroke-width="1.800" stroke-linejoin="round"/><path d="M1346 525.700h8.800l6.200 6.200v5M1356.500 545.300h-10.500a1.200 1.200 0 0 1 -1.200 -1.200v-17.200a1.200 1.200 0 0 1 1.200 -1.200" fill="none" stroke="#d8b92f" stroke-width="2" stroke-linejoin="round"/><path d="M1357.600 537h9a1 1 0 0 1 1 1v7.300a1 1 0 0 1 -1 1h-5.600l-2.200 2.700v-2.700h-1.200a1 1 0 0 1 -1 -1v-7.300a1 1 0 0 1 1 -1z" fill="#d8b92f" stroke="#fafafa" stroke-width="1" paint-order="stroke"/><path d="M1359.500 541.700h5.200" stroke="#fff5c8" stroke-width="1.300"/>
<path d="M1346.700 576.500h18.600a1.700 1.700 0 0 1 1.700 1.700v13.700a1.700 1.700 0 0 1 -1.700 1.700h-8.500l-5 5.400v-5.400h-5.100a1.700 1.700 0 0 1 -1.700 -1.700v-13.700a1.700 1.700 0 0 1 1.700 -1.700z" fill="#dfb53a"/><path d="M1350 583.300h12M1350 587.400h12" stroke="#fff7d6" stroke-width="1.600"/>
<path d="M1349.800 638.500v-11a.800.800 0 0 1 .8-.8h6.200l5 5v6.800" fill="#ece6e2" stroke="#3aa75f" stroke-width="2" stroke-linejoin="round"/><path d="M1356.800 626.700v5h5" fill="none" stroke="#3aa75f" stroke-width="1.800"/><path d="M1345.500 635v8M1366.800 635v8" stroke="#3aa75f" stroke-width="2.600" stroke-linecap="round"/><path d="M1345.500 639.300h21.300" stroke="#3aa75f" stroke-width="2.200"/><path d="M1349.500 642v8.500h13.500v-8.500" fill="none" stroke="#3aa75f" stroke-width="1.500" stroke-dasharray="1.700 1.400"/><path d="M1365.800 626.500v3M1364.300 628h3M1361.800 624.800h1.600M1345.200 628.300h1.400" stroke="#3aa75f" stroke-width="1" />
<path d="M1356 677.200c3 1.700 5.800 2.500 8.600 2.700v8.300c0 5.300-3.500 8.800-8.600 10.800z" fill="#f4f4fd"/><path d="M1356 677.200c-3 1.700-5.800 2.500-8.600 2.700v8.300c0 5.300 3.500 8.800 8.600 10.800z" fill="#dcdcf6"/><path d="M1356 677.200c3 1.700 5.800 2.500 8.600 2.700v8.300c0 5.300-3.500 8.800-8.600 10.800c-5.100-2-8.600-5.500-8.600-10.800v-8.300c2.800-.2 5.600-1 8.600-2.700z" fill="none" stroke="#6266e8" stroke-width="2" stroke-linejoin="round"/>
<g transform="translate(1355 736) rotate(-45)"><path d="M-12.500 -2.100h14.200a5.700 5.700 0 0 1 9.700 -2.300l-4 2.700v3.400l4 2.700a5.700 5.700 0 0 1 -9.700 -2.300h-14.200a2.100 2.100 0 0 1 0 -4.200z" fill="#676767"/><circle cx="-11.800" cy="0" r=".9" fill="#fafafa"/></g><circle cx="1362.600" cy="744.800" r="6.700" fill="#676767" stroke="#fafafa" stroke-width="1.200"/><path d="M1359.200 744.800h6.800M1362.600 741.400v6.800" stroke="#fff" stroke-width="2"/>
</g>
<g id="cam">
<defs>
<clipPath id="camclip"><rect x="1567.300" y="2" width="326.700" height="194.700"/></clipPath>
<linearGradient id="sky" x1="0" y1="0" x2="0" y2="1"><stop offset="0" stop-color="#2a6cc4"/><stop offset=".5" stop-color="#4786d2"/><stop offset="1" stop-color="#6aa0dc"/></linearGradient>
<linearGradient id="hair" x1="0" y1="0" x2="1" y2="0"><stop offset="0" stop-color="#4a372c"/><stop offset=".25" stop-color="#2f221c"/><stop offset=".8" stop-color="#2a1d18"/><stop offset="1" stop-color="#3a2a22"/></linearGradient>
<linearGradient id="hairL" x1="0" y1="0" x2="1" y2="0"><stop offset="0" stop-color="#7a5f4c"/><stop offset=".35" stop-color="#4b372b"/><stop offset="1" stop-color="#33251e"/></linearGradient>
<radialGradient id="face" cx=".45" cy=".4" r=".7"><stop offset="0" stop-color="#e9c3aa"/><stop offset=".7" stop-color="#d9ab90"/><stop offset="1" stop-color="#c4947a"/></radialGradient>
<filter id="b1" x="-10%" y="-10%" width="120%" height="120%"><feGaussianBlur stdDeviation="1.100"/></filter>
<filter id="b2" x="-10%" y="-10%" width="120%" height="120%"><feGaussianBlur stdDeviation="2.200"/></filter>
<filter id="b3" x="-20%" y="-20%" width="140%" height="140%"><feGaussianBlur stdDeviation="3.500"/></filter>
<filter id="leaf" x="0" y="0" width="100%" height="100%"><feTurbulence type="fractalNoise" baseFrequency=".16" numOctaves="2" seed="7" result="n"/><feColorMatrix in="n" type="matrix" values="0 0 0 0 0  0 0 0 0 0  0 0 0 0 0  0 -2.600 0 0 1.500" result="a"/><feComposite in="SourceGraphic" in2="a" operator="in"/><feGaussianBlur stdDeviation=".7"/></filter>
<filter id="leaf2" x="0" y="0" width="100%" height="100%"><feTurbulence type="fractalNoise" baseFrequency=".11" numOctaves="2" seed="23" result="n"/><feColorMatrix in="n" type="matrix" values="0 0 0 0 0  0 0 0 0 0  0 0 0 0 0  2.800 0 0 0 -1.250" result="a"/><feComposite in="SourceGraphic" in2="a" operator="in"/><feGaussianBlur stdDeviation=".9"/></filter>
</defs>
<g clip-path="url(#camclip)">
<rect x="1567" y="2" width="327" height="195" fill="url(#sky)"/>
<g filter="url(#b2)" fill="#fdfdfd"><ellipse cx="1640" cy="24" rx="25" ry="11"/><ellipse cx="1700" cy="20" rx="55" ry="19"/><ellipse cx="1755" cy="18" rx="32" ry="17"/><ellipse cx="1680" cy="33" rx="30" ry="6"/><ellipse cx="1672" cy="53" rx="37" ry="8.500" transform="rotate(-9 1672 53)"/><ellipse cx="1690" cy="49" rx="18" ry="7"/><ellipse cx="1816" cy="40" rx="32" ry="11"/><ellipse cx="1800" cy="47" rx="20" ry="8"/><ellipse cx="1824" cy="62" rx="16" ry="9"/><ellipse cx="1838" cy="48" rx="14" ry="12"/><ellipse cx="1794" cy="19" rx="6" ry="3"/><ellipse cx="1821" cy="12" rx="5" ry="2.500" opacity=".7"/></g>
<g filter="url(#b1)"><path d="M1636 22l8-8l6 1l-7 9z" fill="#5c8fd2" opacity=".8"/></g>
<g filter="url(#b1)"><path d="M1737.700 37v8" stroke="#c9c2a8" stroke-width="1.500"/><path d="M1732.500 56c0-6 2.500-10 5.200-11c2.700 1 5.200 5 5.200 11z" fill="#a89f88"/><rect x="1731" y="55" width="13.500" height="12" fill="#8f8779"/><path d="M1714 76c2-5 6-8 14-8h14v32h-30z" fill="#9a8f88"/><path d="M1716 80v18M1720 79v19M1724 78v20M1728 78v20" stroke="#4d4540" stroke-width="1.600"/><rect x="1711" y="98" width="24" height="12" fill="#b4452e"/><rect x="1710" y="109.500" width="24" height="3" fill="#e8e4dc"/><path d="M1688 130l8-17h30v17z" fill="#68686e"/><rect x="1690" y="128.500" width="34" height="4.500" fill="#e9e9e6"/><rect x="1692" y="133" width="32" height="20" fill="#5a3a30"/><rect x="1694" y="134" width="6" height="18" fill="#b85a3c"/><rect x="1701" y="134" width="8" height="18" fill="#2e3530"/><rect x="1712" y="134" width="8" height="18" fill="#2e3530"/><rect x="1708.500" y="133" width="3" height="22" fill="#e6e6e0"/></g>
<g filter="url(#b1)"><path d="M1567 2h35l9 10l5 16l-2 14l-3 12l12 12l18 8l22 3l14 10l8 12l6 20l-2 22l-6 14l-10 10h-106z" fill="#6aa62c"/><path d="M1640 78l25 5l17 11l11 18l5 23l-1 25l-17 10l-27 0l-14-11l-6-30l-4-30z" fill="#a4ca2e"/><path d="M1567 100l30-12l30 6l22 22l8 26l-10 22l-80 4z" fill="#74ae2e"/><path d="M1567 2h30l6 14l-8 20l-14 16l-14 6z" fill="#5a9628"/><path d="M1575 20l20 5l14 25l-8 25l-30 10z" fill="#7db52e" opacity=".7"/><path d="M1567 158l25-4l40 3l40 2l25 6l-4 10h-126z" fill="#1f3912"/></g>
<g filter="url(#leaf)" opacity=".42"><path d="M1567 2h35l9 10l5 16l-2 14l-3 12l12 12l18 8l22 3l14 10l8 12l6 20l-2 22l-6 14h-116z" fill="#2f5f14"/></g>
<g filter="url(#leaf2)" opacity=".6"><path d="M1567 2h35l9 10l5 16l-2 14l-3 12l12 12l18 8l22 3l14 10l8 12l6 20l-2 22l-6 14h-116z" fill="#b4dc48"/></g>
<g filter="url(#b1)"><path d="M1894 2h-52l4 22l0 12l-2 12l-11 6l-9 16l-11 12l-2 30l2 55h81z" fill="#58962a"/><path d="M1850 2h44v70l-30-8l-16-30z" fill="#6aa630"/><path d="M1812 100l30-10l52 5v50l-40 10l-40-15z" fill="#4a8426"/><path d="M1840 150l54-10v28h-54z" fill="#3a6c1e"/></g>
<g filter="url(#leaf)" opacity=".42"><path d="M1894 2h-52l4 22l0 12l-2 12l-11 6l-9 16l-11 12l-2 30l2 55h81z" fill="#1f4a10"/></g>
<g filter="url(#leaf2)" opacity=".5"><path d="M1894 2h-52l4 22l0 12l-2 12l-11 6l-9 16l-11 12l-2 30l2 40h81z" fill="#a0d048"/></g>
<g filter="url(#b1)"><rect x="1560" y="172" width="127" height="34" fill="#4a8429"/><rect x="1660" y="176" width="40" height="30" fill="#79b348"/><rect x="1664" y="166" width="30" height="6" fill="#a06a50" opacity=".6"/><rect x="1846" y="166" width="48" height="11" fill="#23230f"/><rect x="1846" y="177" width="48" height="4.500" fill="#a9c79a"/><rect x="1846" y="181.500" width="56" height="25" fill="#3c8628"/><path d="M1846 186h48M1846 192h48" stroke="#2c6a1e" stroke-width="1.500"/><rect x="1877.500" y="150" width="5" height="30" fill="#3a3320"/></g>
<g filter="url(#b1)"><path d="M1674 206c3-18 9-33 15-41c8-8 18-13 30-16l20-6v63z" fill="#b7c0b6"/><path d="M1812 140c12 2 24 8 31 16c6 8 10 22 13 41l1 9h-51z" fill="#8a9385"/><path d="M1745 130h56v75h-56z" fill="#c79c82"/><path d="M1712 197c0-30 2-60 8-88c4-24 12-46 24-58c8-8 18-12 27-11.500c11-.5 22 4 30 14c7 10 9 22 11 36c2 16 6 36 10 52c3 14 5 34 4 55v9h-30l-4-69l-50-2l-4 71h-38z" fill="url(#hair)"/><path d="M1743 70c2-10 10-18 28-18c16 0 28 6 32 22c2 12 1 30-2 44c-3 10-10 18-18 22c-5 3-12 3-17 0c-8-4-16-12-20-22c-4-14-5-34-3-48z" fill="url(#face)"/><path d="M1771 40c-14 2-24 12-29 28c-4 14-2 34 0 50c2 16 6 30 8 44c1 12 1 24 0 35v9h-38v-9c0-30 2-60 8-88c4-24 12-46 24-58c8-7 18-11 27-11z" fill="url(#hairL)"/><path d="M1771 40c12 0 22 5 28 13c5 8 6 16 7 26c0 14-1 26-3 38c-2 10-6 16-8 22c-2 8-1 40 0 58v9h32v-9c1-21-1-41-4-55c-4-16-8-36-10-52c-2-14-4-26-11-36c-8-10-19-14.500-31-14z" fill="#2b1e19"/><path d="M1744 66c6-10 16-15 28-15c14 0 24 5 30 16c-8-6-18-8-30-8c-12 0-20 2-28 7z" fill="#3b2a22" opacity=".8"/><path d="M1766 152c2-6 8-9 16-9.500c8 0 12 4 14 9c3 6 5 12 5 20c0 10-2 18-4 25v9h-28v-9c-1-8-3-16-4-24c-1-8-1-15 1-20.500z" fill="#dcb393"/><path d="M1768 168c4 6 6 12 6 20" stroke="#b98d70" stroke-width="1.500" fill="none"/><circle cx="1784.500" cy="162.500" r="1.600" fill="#f6efe0"/><path d="M1751 74c4-2 9-2.500 14-1.500M1781 72.500c5-1 10-.5 14 1.500" stroke="#6a4a3c" stroke-width="1.800" fill="none" opacity=".8"/><ellipse cx="1757.500" cy="85.300" rx="5.200" ry="2.100" fill="#3a2722"/><ellipse cx="1790" cy="85.300" rx="5" ry="2.100" fill="#3a2722"/><path d="M1751.500 84.500c3-2.200 8.500-2.200 12 0M1784.500 84.500c3-2.200 8-2.200 11 0" stroke="#2e1e1a" stroke-width="1.400" fill="none"/><path d="M1771.500 88c-.5 5-1.500 10-2.500 14" stroke="#c49a82" stroke-width="2" fill="none" opacity=".7"/><path d="M1769 104c2 1.500 6 1.500 9 0" stroke="#a8785f" stroke-width="1.800" fill="none"/><path d="M1762 119c4-3 8-3.500 11-2c3-1.500 7-1 11 2c-4 4-8 6-11 6c-4 0-8-2-11-6z" fill="#b57f78"/><path d="M1764 142c6 3 16 3 24-1" stroke="#b38a70" stroke-width="1.500" fill="none"/><path d="M1746 172c3 8 8 16 12 25" stroke="#d8d8d8" stroke-width=".9" fill="none"/></g>
<rect x="1567.300" y="162.700" width="95.700" height="34" fill="#000" opacity=".36"/>
<text x="1571.300" y="184.500" font-size="17.500" font-family="Liberation Sans, sans-serif" font-weight="700" fill="#fff" textLength="86.500" lengthAdjust="spacingAndGlyphs">Lina Zhang</text>
</g>
</g>
</svg>
</body>
</html>
